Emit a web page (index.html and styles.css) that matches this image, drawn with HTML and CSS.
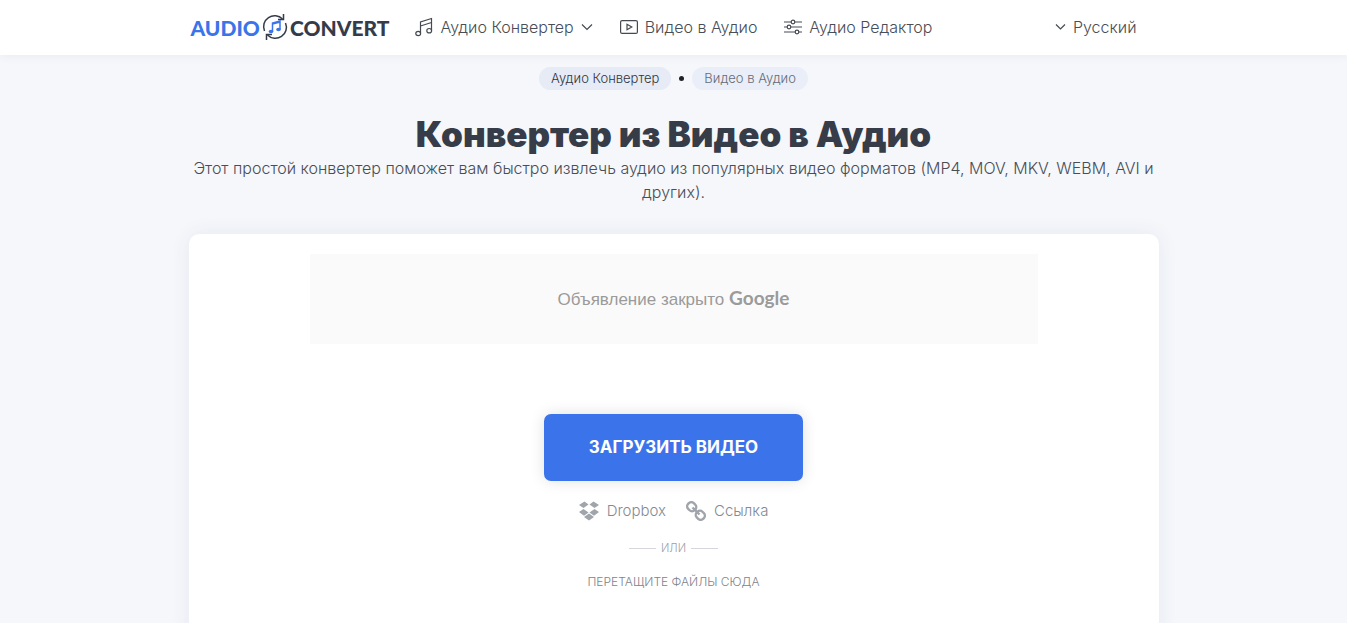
FILE: index.html
```html
<!DOCTYPE html>
<html lang="ru">
<head>
    <meta charset="UTF-8">
    <meta name="viewport" content="width=device-width, initial-scale=1.0">
    <title>Конвертер из Видео в Аудио</title>
    <link rel="stylesheet" href="styles.css">
</head>
<body>
    <header class="header">
        <div class="container header-row">
            <a href="#" class="logo">
                <span class="logo-blue">AUDIO</span>
                <svg class="logo-icon" viewBox="0 0 26 28" fill="none" stroke="#353b48" stroke-width="1.5">
                    <path d="M2.500 18A11 11 0 0 1 20.500 6"/>
                    <path d="M21.500 1v5.500H16"/>
                    <path d="M23.500 10A11 11 0 0 1 5.500 22"/>
                    <path d="M4.500 27v-5.500H10"/>
                    <path d="M10.500 18.500v-8.500l7.500-2v8.500M10.500 11l7.500-2" stroke="#3b74ea"/>
                    <ellipse cx="9" cy="18.500" rx="2.300" ry="1.800" fill="#3b74ea" stroke="none"/>
                    <ellipse cx="16.500" cy="16.500" rx="2.300" ry="1.800" fill="#3b74ea" stroke="none"/>
                </svg>
                <span>CONVERT</span>
            </a>
            <nav class="nav">
                <a href="#" class="nav-link">
                    <svg width="18" height="20" viewBox="0 0 18 20" class="line-icon">
                        <path d="M5.500 16V5l11-3.500v12M5.500 9l11-3.500"/>
                        <ellipse cx="3.200" cy="16.500" rx="2.400" ry="2.200"/>
                        <ellipse cx="14.200" cy="13.700" rx="2.400" ry="2.200"/>
                    </svg>
                    <span>Аудио Конвертер</span>
                    <svg width="12" height="8" viewBox="0 0 12 8" class="line-icon"><path d="M1 1.500l5 5 5-5"/></svg>
                </a>
                <a href="#" class="nav-link">
                    <svg width="18" height="14" viewBox="0 0 18 14" class="line-icon">
                        <rect x="0.600" y="0.600" width="16.800" height="12.800" rx="1.500"/>
                        <path d="M7 4.200v5.600L11.800 7z"/>
                    </svg>
                    <span>Видео в Аудио</span>
                </a>
                <a href="#" class="nav-link">
                    <svg width="18" height="16" viewBox="0 0 18 16" class="line-icon">
                        <path d="M0 3h7.200M10.800 3H18M0 8h3.200M6.800 8H18M0 13h11.200M14.800 13H18"/>
                        <circle cx="9" cy="3" r="1.800"/>
                        <circle cx="5" cy="8" r="1.800"/>
                        <circle cx="13" cy="13" r="1.800"/>
                    </svg>
                    <span>Аудио Редактор</span>
                </a>
            </nav>
            <button type="button" class="lang">
                <svg width="11" height="8" viewBox="0 0 11 8" class="line-icon"><path d="M1 1.500l4.500 4.500L10 1.500"/></svg>
                <span>Русский</span>
            </button>
        </div>
    </header>

    <main class="container">
        <div class="crumbs">
            <a href="#" class="crumb">Аудио Конвертер</a>
            <span class="dot"></span>
            <a href="#" class="crumb crumb-light">Видео в Аудио</a>
        </div>
        <h1>Конвертер из Видео в Аудио</h1>
        <p class="intro">Этот простой конвертер поможет вам быстро извлечь аудио из популярных видео форматов (MP4, MOV, MKV, WEBM, AVI и других).</p>

        <section class="card">
            <div class="ad">
                <span>Объявление закрыто <span class="google">Google</span></span>
            </div>
            <button type="button" class="upload">ЗАГРУЗИТЬ ВИДЕО</button>
            <div class="sources">
                <button type="button" class="source">
                    <svg width="20" height="20" viewBox="0 0 20 20" fill="currentColor">
                        <path d="M5.500 0.500L9.500 3.500 4.500 7 0 4zM14.500 0.500L20 4l-4.500 3L10.500 3.500zM4.500 8L9.500 11.500l-4.500 3.200L0 11zM15.500 8l4.500 3-5 3.700-4.500-3.200zM5 16l5-3.500 5 3.500-5 3.500z"/>
                    </svg>
                    <span>Dropbox</span>
                </button>
                <button type="button" class="source">
                    <svg width="20" height="20" viewBox="0 0 20 20" fill="none" stroke="currentColor" stroke-width="2.400">
                        <rect x="-4.500" y="-4" width="9" height="8" rx="3.500" transform="translate(5.700 5.700) rotate(45)"/>
                        <rect x="-4.500" y="-4" width="9" height="8" rx="3.500" transform="translate(14.300 14.300) rotate(45)"/>
                        <path d="M6.500 6.500l7 7"/>
                    </svg>
                    <span>Ссылка</span>
                </button>
            </div>
            <div class="or">ИЛИ</div>
            <p class="drop">ПЕРЕТАЩИТЕ ФАЙЛЫ СЮДА</p>
        </section>
    </main>
</body>
</html>
```
FILE: styles.css
```css
* {
    margin: 0;
    padding: 0;
    box-sizing: border-box;
}
body {
    min-height: 100vh;
    background-color: #f5f7fb;
    font-family: Inter, "Open Sans", sans-serif;
    font-size: 16px;
    font-weight: 300;
    color: #484d56;
}
a {
    color: inherit;
    text-decoration: none;
}
button {
    border: none;
    background: none;
    font: inherit;
    color: inherit;
    cursor: pointer;
}
svg {
    flex: none;
}
.container {
    max-width: 970px;
    margin: 0 auto;
}
.header {
    background-color: white;
    box-shadow: 0 0 10px rgba(50, 60, 90, 0.08);
}
.header-row {
    display: flex;
    align-items: center;
    height: 55px;
    padding: 0 22px 1px 2px;
}
.logo {
    display: flex;
    align-items: center;
    gap: 2px;
    font-family: Lato, sans-serif;
    font-size: 21px;
    font-weight: 900;
    color: #353b48;
}
.logo-blue {
    color: #3b74ea;
}
.logo-icon {
    width: 26px;
    height: 28px;
}
.nav {
    display: flex;
    gap: 27px;
    margin-left: 26px;
}
.nav-link, .lang {
    display: flex;
    align-items: center;
    gap: 7px;
    white-space: nowrap;
}
.line-icon {
    fill: none;
    stroke: #454a52;
    stroke-width: 1.2;
}
.lang {
    margin-left: auto;
}
.crumbs {
    display: flex;
    justify-content: center;
    align-items: center;
    gap: 8px;
    padding-top: 12px;
}
.crumb {
    padding: 0 12px;
    border-radius: 12px;
    background-color: #e6ebf5;
    font-size: 13px;
    line-height: 23px;
    color: #30353f;
}
.crumb-light {
    background-color: #e9eef8;
    color: #666b76;
}
.dot {
    width: 5px;
    height: 5px;
    border-radius: 50%;
    background-color: #222;
}
h1 {
    margin-top: 23px;
    font-size: 35px;
    font-weight: 900;
    line-height: 43px;
    text-align: center;
    color: #373c49;
}
.intro {
    font-size: 16px;
    line-height: 24px;
    text-align: center;
}
.card {
    display: flex;
    flex-direction: column;
    align-items: center;
    margin-top: 30px;
    padding: 20px 20px 60px;
    border-radius: 10px;
    background-color: white;
    box-shadow: 0 0 20px rgba(50, 60, 90, 0.08);
}
.ad {
    display: flex;
    justify-content: center;
    align-items: center;
    width: 100%;
    max-width: 728px;
    height: 90px;
    background-color: #fafafa;
    font-family: "Liberation Sans", Arial, sans-serif;
    font-size: 17px;
    line-height: 20px;
    color: #9b9b9b;
}
.google {
    font-family: Lato, sans-serif;
    font-size: 19px;
    font-weight: bold;
}
.upload {
    margin-top: 70px;
    padding: 0 45px;
    border-radius: 7px;
    background-color: #3b74ea;
    box-shadow: 0 0 15px rgba(0, 0, 0, 0.12);
    font-size: 17px;
    font-weight: bold;
    line-height: 67px;
    color: white;
}
.sources {
    display: flex;
    gap: 20px;
    margin-top: 18px;
    font-size: 15px;
    line-height: 24px;
    color: #858a92;
}
.source {
    display: flex;
    align-items: center;
    gap: 8px;
}
.source svg {
    color: #a0a4ab;
}
.or {
    display: flex;
    align-items: center;
    gap: 5px;
    margin-top: 15px;
    font-size: 11px;
    line-height: 20px;
    color: #9c9fa8;
}
.or::before, .or::after {
    content: "";
    width: 27px;
    height: 1px;
    background-color: #d5d7dc;
}
.drop {
    margin-top: 14px;
    font-size: 12px;
    line-height: 20px;
    color: #80848c;
}
```
